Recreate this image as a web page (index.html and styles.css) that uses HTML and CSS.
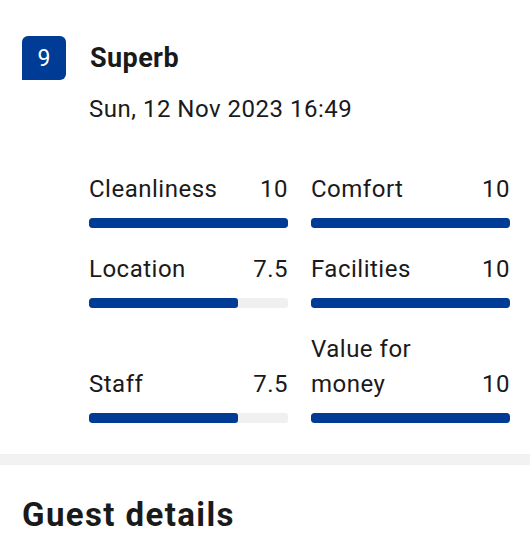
FILE: index.html
```html
<!DOCTYPE html>
<html lang="en">
<head>
<meta charset="utf-8">
<link rel="stylesheet" href="styles.css">
</head>
<body>
<section class="review">
  <div class="head">
    <div class="badge">9</div>
    <div class="title">Superb</div>
  </div>
  <div class="body">
    <div class="date">Sun, 12 Nov 2023 16:49</div>
    <div class="grid">
      <div class="item">
        <div class="label-row"><span class="label">Cleanliness</span><span class="num">10</span></div>
        <div class="track"><div class="fill" style="width:100%"></div></div>
      </div>
      <div class="item">
        <div class="label-row"><span class="label">Comfort</span><span class="num">10</span></div>
        <div class="track"><div class="fill" style="width:100%"></div></div>
      </div>
      <div class="item">
        <div class="label-row"><span class="label">Location</span><span class="num">7.5</span></div>
        <div class="track"><div class="fill" style="width:75%"></div></div>
      </div>
      <div class="item">
        <div class="label-row"><span class="label">Facilities</span><span class="num">10</span></div>
        <div class="track"><div class="fill" style="width:100%"></div></div>
      </div>
      <div class="item">
        <div class="label-row"><span class="label">Staff</span><span class="num">7.5</span></div>
        <div class="track"><div class="fill" style="width:75%"></div></div>
      </div>
      <div class="item">
        <div class="label-row"><span class="label">Value for money</span><span class="num">10</span></div>
        <div class="track"><div class="fill" style="width:100%"></div></div>
      </div>
    </div>
  </div>
</section>
<div class="sep"></div>
<h2 class="guest">Guest details</h2>
</body>
</html>
```
FILE: styles.css
```css
html, body {
  margin: 0;
  padding: 0;
  background: #ffffff;
}
body {
  font-family: Roboto, "Noto Sans", Arial, sans-serif;
  color: #1a1a1a;
  width: 530px;
  overflow: hidden;
}
.review {
  padding: 36px 20px 31px 22px;
}
.head {
  display: flex;
  align-items: center;
  gap: 24px;
  height: 44px;
}
.badge {
  width: 44px;
  height: 44px;
  background: #003b95;
  color: #ffffff;
  border-radius: 6px 6px 6px 0;
  display: flex;
  align-items: center;
  justify-content: center;
  font-size: 23px;
  line-height: 1;
}
.title {
  font-size: 27px;
  font-weight: 700;
  line-height: 30px;
  letter-spacing: 0.4px;
}
.body {
  padding-left: 67px;
}
.date {
  margin-top: 14px;
  font-size: 24px;
  line-height: 30px;
  letter-spacing: 0.5px;
}
.grid {
  margin-top: 48px;
  display: grid;
  grid-template-columns: 199px 199px;
  column-gap: 23px;
  row-gap: 24px;
}
.item {
  display: flex;
  flex-direction: column;
}
.label-row {
  flex: 1;
  display: flex;
  justify-content: space-between;
  align-items: flex-end;
  font-size: 24px;
  line-height: 35px;
  letter-spacing: 0.5px;
}
.label {
  max-width: 160px;
}
.num {
  text-align: right;
}
.track {
  margin-top: 11px;
  height: 10px;
  background: #f0f0f0;
  border-radius: 3px;
  overflow: hidden;
}
.fill {
  height: 100%;
  background: #003b95;
  border-radius: 3px;
}
.sep {
  height: 11px;
  background: #f2f2f2;
}
.guest {
  margin: 30px 0 0 22px;
  font-size: 33px;
  line-height: 40px;
  font-weight: 700;
  letter-spacing: 1.4px;
}
```
